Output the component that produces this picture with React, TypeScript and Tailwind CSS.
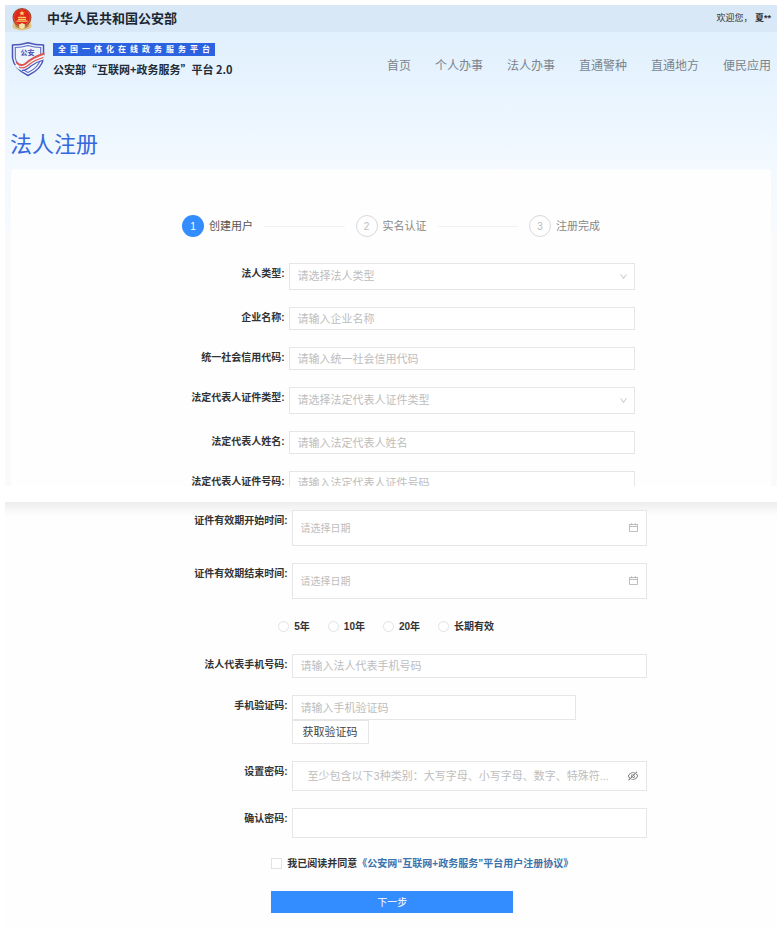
import type { ReactNode } from "react";
import { AiOutlineCalendar, AiOutlineDown, AiOutlineEyeInvisible } from "react-icons/ai";

const NAV = ["首页", "个人办事", "法人办事", "直通警种", "直通地方", "便民应用"];
const STEPS = ["创建用户", "实名认证", "注册完成"];
const PERIODS = ["5年", "10年", "20年", "长期有效"];

const BOX =
  "block w-full rounded-none border border-[#e6e6e6] bg-white px-2 text-[11px] text-[#555] outline-none placeholder:text-[#bdbdbd]";

function Emblem() {
  return (
    <svg viewBox="0 0 22 24" className="h-6 w-[22px]" aria-hidden="true">
      <path d="M2.500 14 L1.500 19 Q2 22 6 22.500 L11 23.500 L16 22.500 Q20 22 20.500 19 L19.500 14Z" fill="#e3c083" />
      <path d="M4 18 Q11 22 18 18 L17 20 Q11 23 5 20Z" fill="#b07a3a" />
      <circle cx="11" cy="10.500" r="9.500" fill="#8a4a2c" />
      <circle cx="11" cy="10.500" r="8.700" fill="#d9553a" />
      <circle cx="11" cy="10" r="7.800" fill="#e3261b" />
      <path d="M11 3.600l.8 1.600 1.800.2-1.300 1.300.3 1.800-1.600-.9-1.600.9.3-1.800-1.300-1.300 1.800-.2z" fill="#f8d264" />
      <path d="M7.500 9.800h7l1 1.300h-9zM7 11.700h8v1.300H7zM5.500 13.600h11v1.200h-11z" fill="#f5cd62" />
      <path d="M8 17.500 L11 16 L14 17.500 L13.500 21 L11 22 L8.500 21Z" fill="#f7e3a8" />
    </svg>
  );
}

function Shield() {
  return (
    <svg viewBox="0 0 34 36" className="h-9 w-[34px]" aria-hidden="true">
      <path
        d="M1.500 4 Q10 4 17 1.800 Q24 4 32.500 4 V17 Q31 28 17 34.500 Q3 28 1.500 17Z"
        fill="#eef5fe"
        stroke="#4a55b8"
        strokeWidth="1.500"
      />
      <path d="M4.300 6.500 Q11 6.500 17 4.600 Q23 6.500 29.700 6.500 V17 Q28 26.500 17 31.500 Q6 26.500 4.300 17Z" fill="none" stroke="#5f6cc6" strokeWidth="1.100" />
      <path d="M6 23 Q10 28 15 24.500 Q22 18.500 33.500 15" fill="none" stroke="#eef5fe" strokeWidth="6" />
      <path d="M5.500 21 Q9 26 14 23 Q22 16 33.500 12.500" fill="none" stroke="#dd5450" strokeWidth="2" />
      <path d="M8 26 Q12 28.500 17 24.500 Q23 19 32.500 16.500" fill="none" stroke="#dd5450" strokeWidth="1.200" />
      <path d="M11 29.500 Q16 29 20 25 Q25 21 31.500 19.500" fill="none" stroke="#4a55b8" strokeWidth="1.100" />
      <text x="16.500" y="14" textAnchor="middle" fontSize="7" fontWeight="700" fill="#3f4ab0">
        公安
      </text>
    </svg>
  );
}

function Row({ id, label, lower, children }: { id: string; label: string; lower?: boolean; children: ReactNode }) {
  return (
    <div className="flex gap-1">
      <label
        htmlFor={id}
        className={
          lower
            ? "w-[36.6%] shrink-0 text-right text-[10px] leading-[22px] font-bold whitespace-nowrap text-[#333]"
            : "w-[36%] shrink-0 text-right text-[10px] leading-[22px] font-bold whitespace-nowrap text-[#333]"
        }
      >
        {label}:
      </label>
      <div className={lower ? "w-[46.1%]" : "w-[45.6%]"}>{children}</div>
    </div>
  );
}

function SelectBox({ id, text }: { id: string; text: string }) {
  return (
    <div className="relative">
      <select id={id} className={`${BOX} h-[27px] appearance-none text-[#bdbdbd]`} defaultValue="">
        <option value="">{text}</option>
      </select>
      <AiOutlineDown className="pointer-events-none absolute top-[9px] right-[7px] size-[9px] text-[#bbb]" />
    </div>
  );
}

function DateBox({ id }: { id: string }) {
  return (
    <div className="relative">
      <input
        id={id}
        type="text"
        placeholder="请选择日期"
        className="block h-9 w-full rounded-none border border-[#e6e6e6] bg-white px-2 text-[10px] outline-none placeholder:text-[#bdbdbd]"
      />
      <AiOutlineCalendar className="pointer-events-none absolute top-3 right-2 size-[11px] text-[#aaa]" />
    </div>
  );
}

export default function App() {
  return (
    <div className="bg-white pt-[5px] pl-[5px] font-['Liberation_Sans','Noto_Sans_CJK_SC',sans-serif]">
      <section className="bg-[linear-gradient(to_bottom,#deeefc_0px,#e6f3fe_70px,#f3f9ff_164px,#f8fafc_230px,#fafafa_300px)]">
        <div className="flex h-[27px] items-center justify-between bg-[#d8e8f7] px-1.5">
          <div className="flex items-center gap-[14px]">
            <Emblem />
            <span className="text-[13px] font-bold text-[#1c2733]">中华人民共和国公安部</span>
          </div>
          <span className="text-[9px] text-[#333]">
            欢迎您， <b>夏**</b>
          </span>
        </div>

        <header className="flex items-start justify-between px-1.5 pt-[9px]">
          <div className="flex gap-2">
            <Shield />
            <div>
              <p className="mt-0.5 h-[13px] w-[162px] bg-[#2c62e0] px-[5px] text-[8px] leading-[13px] font-bold whitespace-nowrap text-white [text-align-last:justify]">
                全国一体化在线政务服务平台
              </p>
              <p className="mt-1 font-['Noto_Sans_CJK_SC',sans-serif] text-[11px] leading-[18px] font-bold whitespace-nowrap text-[#222c38]">
                公安部“互联网+政务服务”平台 2.0
              </p>
            </div>
          </div>
          <nav className="mt-[13px] flex gap-6 text-xs leading-6 whitespace-nowrap text-[#7a848e]">
            {NAV.map((n) => (
              <a key={n} href="#">
                {n}
              </a>
            ))}
          </nav>
        </header>

        <h1 className="mt-[51px] mb-2 pl-[5px] text-[22px] leading-8 text-[#3468dc]">法人注册</h1>

        <div className="mx-1.5 rounded-t-[4px] bg-[#fefefe] pt-[46px]">
          <ol className="flex items-center px-[22.5%] text-[11px] whitespace-nowrap">
            {STEPS.map((s, i) => (
              <li key={s} className={i < 2 ? "flex flex-1 items-center" : "flex items-center"}>
                <span
                  className={
                    i === 0
                      ? "flex size-[22px] shrink-0 items-center justify-center rounded-full bg-[#338dff] text-[10px] text-white"
                      : "flex size-[22px] shrink-0 items-center justify-center rounded-full border border-[#d9d9d9] text-[10px] text-[#bbb]"
                  }
                >
                  {i + 1}
                </span>
                <span className={i === 0 ? "ml-[5px] text-[#555]" : "ml-[5px] text-[#888]"}>{s}</span>
                {i < 2 && <span className="mx-[11px] h-px flex-1 bg-[#f1f1f1]" />}
              </li>
            ))}
          </ol>

          <div className="mt-[26px] flex flex-col">
            <div className="flex flex-col gap-[17px] [&>div]:max-h-[27px]">
              <Row id="type" label="法人类型">
                <SelectBox id="type" text="请选择法人类型" />
              </Row>
              <Row id="company" label="企业名称">
                <input id="company" className={`${BOX} h-[23px]`} placeholder="请输入企业名称" />
              </Row>
              <Row id="credit" label="统一社会信用代码">
                <input id="credit" className={`${BOX} h-[23px]`} placeholder="请输入统一社会信用代码" />
              </Row>
              <Row id="doctype" label="法定代表人证件类型">
                <SelectBox id="doctype" text="请选择法定代表人证件类型" />
              </Row>
              <Row id="rep" label="法定代表人姓名">
                <input id="rep" className={`${BOX} h-[23px]`} placeholder="请输入法定代表人姓名" />
              </Row>
            </div>
            <div className="mt-[17px] h-[15px] overflow-hidden">
              <Row id="docno" label="法定代表人证件号码">
                <input id="docno" className={`${BOX} h-[23px]`} placeholder="请输入法定代表人证件号码" />
              </Row>
            </div>
          </div>
        </div>
      </section>

      <form
        className="mt-4 flex flex-col gap-[17px] bg-[linear-gradient(to_bottom,#ededed_0px,#fefefe_14px)] pt-2 pb-[14px]"
        onSubmit={(e) => e.preventDefault()}
      >
        <Row lower id="start" label="证件有效期开始时间">
          <DateBox id="start" />
        </Row>
        <Row lower id="end" label="证件有效期结束时间">
          <DateBox id="end" />
        </Row>
        <div className="flex h-[21px] items-center gap-[18px] pl-[35.4%] text-[10px] font-bold whitespace-nowrap text-[#333]">
          {PERIODS.map((p) => (
            <label key={p} className="flex items-center gap-[5px]">
              <input type="radio" name="period" className="size-[11px] appearance-none rounded-full border border-[#e2e2e2] bg-white" />
              {p}
            </label>
          ))}
        </div>
        <Row lower id="phone" label="法人代表手机号码">
          <input id="phone" className={`${BOX} h-6`} placeholder="请输入法人代表手机号码" />
        </Row>
        <Row lower id="code" label="手机验证码">
          <div className="w-[80%]">
            <input id="code" className={`${BOX} h-[25px]`} placeholder="请输入手机验证码" />
          </div>
          <button
            type="button"
            className="block h-6 border border-[#e6e6e6] bg-white px-[10px] text-[11px] leading-[22px] whitespace-nowrap text-[#444]"
          >
            获取验证码
          </button>
        </Row>
        <Row lower id="pwd" label="设置密码">
          <div className="flex h-[30px] items-center border border-[#e6e6e6] bg-white pr-[7px] pl-[15px]">
            <input
              id="pwd"
              type="password"
              className="min-w-0 flex-1 text-[11px] outline-none placeholder:text-[#bdbdbd]"
              placeholder="至少包含以下3种类别：大写字母、小写字母、数字、特殊符..."
            />
            <button type="button" aria-label="显示密码" className="shrink-0">
              <AiOutlineEyeInvisible className="size-3 text-[#777]" />
            </button>
          </div>
        </Row>
        <Row lower id="confirm" label="确认密码">
          <input id="confirm" type="password" className={`${BOX} h-[30px]`} />
        </Row>
        <div className="flex h-4 items-center gap-[5px] pl-[34.5%] text-[10px] font-bold whitespace-nowrap text-[#333]">
          <input id="agree" type="checkbox" className="size-[11px] appearance-none border border-[#e2e2e2] bg-white" />
          <span>
            <label htmlFor="agree">我已阅读并同意</label>
            <a href="#" className="text-[#3a73ad]">
              《公安网“互联网+政务服务”平台用户注册协议》
            </a>
          </span>
        </div>
        <button type="submit" className="mt-[3px] ml-[34.5%] h-[22px] w-[31.3%] bg-[#338dff] text-[10px] text-white">
          下一步
        </button>
      </form>
    </div>
  );
}
